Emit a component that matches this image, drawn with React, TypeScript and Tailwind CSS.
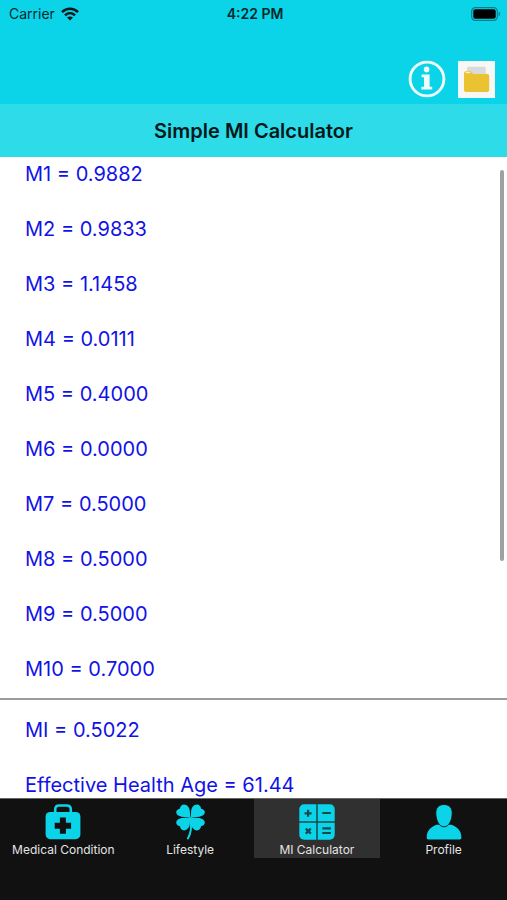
import React from 'react';

interface Tab {
  label: string;
  icon: React.ReactNode;
  active?: boolean;
}

const RESULTS = [
  { label: 'M1', value: '0.9882' },
  { label: 'M2', value: '0.9833' },
  { label: 'M3', value: '1.1458' },
  { label: 'M4', value: '0.0111' },
  { label: 'M5', value: '0.4000' },
  { label: 'M6', value: '0.0000' },
  { label: 'M7', value: '0.5000' },
  { label: 'M8', value: '0.5000' },
  { label: 'M9', value: '0.5000' },
  { label: 'M10', value: '0.7000' },
];

const SUMMARY = [
  { label: 'MI', value: '0.5022' },
  { label: 'Effective Health Age', value: '61.44' },
];

const WifiIcon = () => (
  <svg viewBox="0 0 18 14" className="w-[18px] h-[14px]" fill="none" stroke="#06191c" strokeWidth="2.6">
    <path d="M1 5.1C5.6.6 12.4.6 17 5.1" />
    <path d="M4 8.4c2.9-2.8 7.1-2.8 10 0" />
    <path d="M9 13.6 6 10.6c1.7-1.6 4.3-1.6 6 0z" fill="#06191c" stroke="none" />
  </svg>
);

const BatteryIcon = () => (
  <svg viewBox="0 0 30 14" className="w-[30px] h-[14px]">
    <rect x="0.7" y="0.7" width="25.6" height="12.6" rx="3.6" fill="none" stroke="#067f8a" strokeWidth="1.2" />
    <rect x="2.3" y="2.3" width="22.4" height="9.4" rx="2" fill="#000" />
    <path d="M27.6 4.8c2 .6 2 3.8 0 4.4z" fill="#067f8a" />
  </svg>
);

const InfoIcon = () => (
  <svg viewBox="0 0 38 38" className="w-[38px] h-[38px]">
    <circle cx="19" cy="19" r="16.9" fill="none" stroke="#effcfd" strokeWidth="2.9" />
    <circle cx="18.6" cy="9.4" r="2.8" fill="#effcfd" />
    <path d="M13.6 14.4h8v12.4h2.6v2.8H13.4v-2.8H16v-9.6h-2.4z" fill="#effcfd" />
  </svg>
);

const FolderIcon = () => (
  <svg viewBox="0 0 37 37" className="w-[37px] h-[37px]">
    <rect width="37" height="37" fill="#f7f7f6" />
    <path d="M10.5 5.8h15.6q1.6 0 1.6 1.6V15H9V7.4q0-1.6 1.5-1.6z" fill="#d9dada" />
    <path d="M6 12q0-1.8 1.8-1.8h5l2.4 2.7h14.2q1.8 0 1.8 1.8V29q0 1.9-1.9 1.9H7.9Q6 30.9 6 29z" fill="#ebc232" />
    <path d="M7.6 11.5h4.8" stroke="#fff1ba" strokeWidth="1.3" />
  </svg>
);

const MedicalIcon = () => (
  <svg viewBox="0 0 36 36" className="w-9 h-9 shrink-0">
    <path d="M10.2 9V5.5q0-4 4-4h7.6q4 0 4 4V9" fill="none" stroke="#0bd4e8" strokeWidth="2.6" />
    <rect x="0.6" y="8" width="34.8" height="27.2" rx="4.6" fill="#0bd4e8" />
    <path d="M14.9 13.6h6v5.1h5.2v6h-5.2v5.1h-6v-5.1H9.7v-6h5.2z" fill="#111" />
  </svg>
);

const CloverIcon = () => (
  <svg viewBox="0 0 36 36" className="w-9 h-9 shrink-0" fill="#0bd4e8">
    <path d="M18.3 13.4 9.4 12.8C6.6 12.2 4.4 10.6 4.2 8.6 4 6.700 5.400 5.100 7.800 4.700 8.200 2 9.900.400 12 .400 15 .500 17.400 3.200 17.800 6.600z" />
    <path d="M18.700 13.400 27.600 12.800C30.400 12.200 32.600 10.600 32.800 8.600 33 6.700 31.600 5.100 29.200 4.700 28.800 2 27.100.400 25 .400 22 .500 19.600 3.200 19.200 6.600z" />
    <path d="M18.300 13.400 9.400 14C6.600 14.600 4.400 16.200 4.200 18.200 4 20.100 5.400 21.700 7.800 22.100 8.200 24.800 9.900 26.400 12 26.400 15 26.300 17.400 23.600 17.800 20.200z" />
    <path d="M18.700 13.400 27.600 14C30.400 14.600 32.600 16.200 32.800 18.200 33 20.100 31.600 21.700 29.200 22.100 28.800 24.800 27.100 26.400 25 26.400 22 26.300 19.600 23.600 19.200 20.200z" />
    <path d="M18.600 14c1.200 9.700.6 15.500-2.700 20.500" fill="none" stroke="#0bd4e8" strokeWidth="2" strokeLinecap="round" />
  </svg>
);

const CalculatorIcon = () => (
  <svg viewBox="0 0 36 36" className="w-9 h-9 shrink-0">
    <rect x="0.3" y="0.3" width="35.4" height="35.4" rx="4.8" fill="#0bd4e8" />
    <g fill="none" stroke="#17484e">
      <path d="M18 0v36M0 18h36" strokeWidth="1.5" />
      <path d="M5.6 9.3h7M9.1 5.8v7M23.3 9h8.6M23.3 24.3h8.6M23.3 29h8.6" strokeWidth="2.2" />
      <path d="m6.8 24.6 5 5m0-5-5 5" strokeWidth="2.2" />
    </g>
  </svg>
);

const ProfileIcon = () => (
  <svg viewBox="0 0 36 36" className="w-9 h-9 shrink-0">
    <path d="M.7 33.7C.9 26.5 4 23.8 10.4 20.8h15.2c6.4 3 9.6 5.7 9.8 12.9 0 1-.7 1.7-1.7 1.7H2.4C1.4 35.4.7 34.7.7 33.7z" fill="#0bd4e8" />
    <path d="M18 .5c5.6 0 8.4 3.7 8.2 9.2-.3 6.7-3.2 13.1-8.2 13.1S10.1 16.4 9.8 9.7C9.6 4.2 12.4.5 18 .5z" fill="#0bd4e8" stroke="#111" strokeWidth="0.9" />
  </svg>
);

const TABS: Tab[] = [
  { label: 'Medical Condition', icon: <MedicalIcon /> },
  { label: 'Lifestyle', icon: <CloverIcon /> },
  { label: 'MI Calculator', icon: <CalculatorIcon />, active: true },
  { label: 'Profile', icon: <ProfileIcon /> },
];

const StatusBar = () => (
  <div className="grid grid-cols-3 items-center h-7 pl-[9px] pr-1.5 text-sm text-[#06282c]">
    <div className="flex items-center gap-1.5">
      <span>Carrier</span>
      <WifiIcon />
    </div>
    <span className="text-center font-semibold">4:22 PM</span>
    <div className="flex justify-end">
      <BatteryIcon />
    </div>
  </div>
);

const ResultLine = ({ label, value }: { label: string; value: string }) => (
  <p className="leading-[33px] whitespace-nowrap">
    {label} = {value}
  </p>
);

const App: React.FC = () => {
  return (
    <div className="flex flex-col h-screen bg-white font-['Inter',sans-serif]">
      <header className="shrink-0 bg-[#0bd4e8]">
        <StatusBar />
        <div className="flex items-end justify-end gap-3 h-[76px] pr-3 pb-1.5">
          <button type="button" aria-label="Information">
            <InfoIcon />
          </button>
          <button type="button" aria-label="Saved records">
            <FolderIcon />
          </button>
        </div>
        <h1 className="flex items-center justify-center h-[53px] bg-[#2ddbe9] text-xl font-semibold text-[#04181a]">
          Simple MI Calculator
        </h1>
      </header>

      <main className="relative flex-1 min-h-0 overflow-hidden text-xl text-[#1212e6]">
        <section className="flex flex-col gap-[22px] px-[25px] pt-px pb-3 border-b-2 border-[#9b9b9b]">
          {RESULTS.map((r) => (
            <ResultLine key={r.label} label={r.label} value={r.value} />
          ))}
        </section>
        <section className="flex flex-col gap-[22px] px-[25px] pt-3.5">
          {SUMMARY.map((r) => (
            <ResultLine key={r.label} label={r.label} value={r.value} />
          ))}
        </section>

        {/* scroll indicator */}
        <div className="absolute top-[13px] right-[3px] w-1 h-[61%] rounded-full bg-[#a0a0a0]" />
      </main>

      <nav className="grid grid-cols-4 items-start shrink-0 h-[102px] bg-[#111] border-t border-[#666]">
        {TABS.map((tab) => (
          <button
            key={tab.label}
            type="button"
            aria-current={tab.active ? 'page' : undefined}
            className={`flex flex-col items-center h-[59px] pt-[5px] text-xs text-[#e4e4e4] whitespace-nowrap ${
              tab.active ? 'bg-[#303030]' : ''
            }`}
          >
            {tab.icon}
            <span className="leading-5">{tab.label}</span>
          </button>
        ))}
      </nav>
    </div>
  );
};

export default App;
